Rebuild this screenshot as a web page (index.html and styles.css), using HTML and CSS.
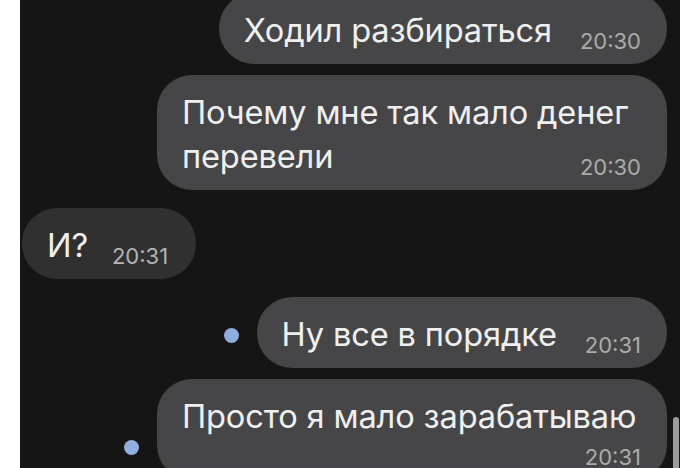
FILE: index.html
```html
<!DOCTYPE html>
<html lang="ru">
<head>
    <meta charset="UTF-8">
    <meta name="viewport" content="width=device-width, initial-scale=1.0">
    <title>Чат</title>
    <link rel="stylesheet" href="styles.css">
</head>
<body>
    <div class="screen">
        <div class="chat">
            <div class="row out">
                <div class="bubble">
                    <div class="line">
                        <span class="text">Ходил разбираться</span>
                        <span class="time">20:30</span>
                    </div>
                </div>
            </div>

            <div class="row out">
                <div class="bubble wide">
                    <div class="text">Почему мне так мало денег</div>
                    <div class="line">
                        <span class="text">перевели</span>
                        <span class="time push">20:30</span>
                    </div>
                </div>
            </div>

            <div class="row in far">
                <div class="bubble incoming">
                    <div class="line">
                        <span class="text">И?</span>
                        <span class="time">20:31</span>
                    </div>
                </div>
            </div>

            <div class="row out far">
                <span class="dot"></span>
                <div class="bubble">
                    <div class="line">
                        <span class="text">Ну все в порядке</span>
                        <span class="time">20:31</span>
                    </div>
                </div>
            </div>

            <div class="row out">
                <span class="dot"></span>
                <div class="bubble wide">
                    <div class="text nowrap">Просто я мало зарабатываю</div>
                    <div class="time-row">
                        <span class="time">20:31</span>
                    </div>
                </div>
            </div>
        </div>
        <div class="scrollbar"></div>
    </div>
</body>
</html>
```

FILE: styles.css
```css
html, body {
    margin: 0;
    padding: 0;
    height: 100%;
    background: #ffffff;
    overflow: hidden;
}

body {
    font-family: Inter, Roboto, "Noto Sans", sans-serif;
}

.screen {
    position: relative;
    margin: 0 20px;
    height: 468px;
    background: #151515;
    overflow: hidden;
}

.chat {
    display: flex;
    flex-direction: column;
    gap: 11px;
    margin-top: -7px;
    padding: 0 13px 0 2px;
}

.row {
    display: flex;
    align-items: flex-end;
}

.row.out {
    justify-content: flex-end;
}

.row.in {
    justify-content: flex-start;
}

.row.far {
    margin-top: 7px;
}

.bubble {
    background: #464648;
    color: #efefef;
    border-radius: 35px;
    padding: 15px 26px 12px 25px;
    box-sizing: border-box;
}

.bubble.wide {
    width: 510px;
}

.bubble.incoming {
    background: #303030;
    padding-right: 28px;
}

.text {
    font-size: 32.6px;
    line-height: 44px;
    letter-spacing: -0.15px;
}

.nowrap {
    white-space: nowrap;
}

.line {
    display: flex;
    align-items: flex-end;
}

.time {
    font-size: 22px;
    line-height: 22px;
    color: #ababab;
    margin-left: 28px;
    white-space: nowrap;
}

.incoming .time {
    color: #b4b4b4;
    margin-left: 24px;
}

.time.push {
    margin-left: auto;
}

.time-row {
    display: flex;
    justify-content: flex-end;
    margin-top: 8px;
}

.time-row .time {
    margin-left: 0;
}

.dot {
    width: 15px;
    height: 15px;
    border-radius: 50%;
    background: #90ade0;
    margin: 0 18px 25px 0;
    flex-shrink: 0;
}

.scrollbar {
    position: absolute;
    right: 1px;
    top: 417px;
    width: 6px;
    height: 60px;
    border-radius: 3px;
    background: #9c9c9c;
}
```
